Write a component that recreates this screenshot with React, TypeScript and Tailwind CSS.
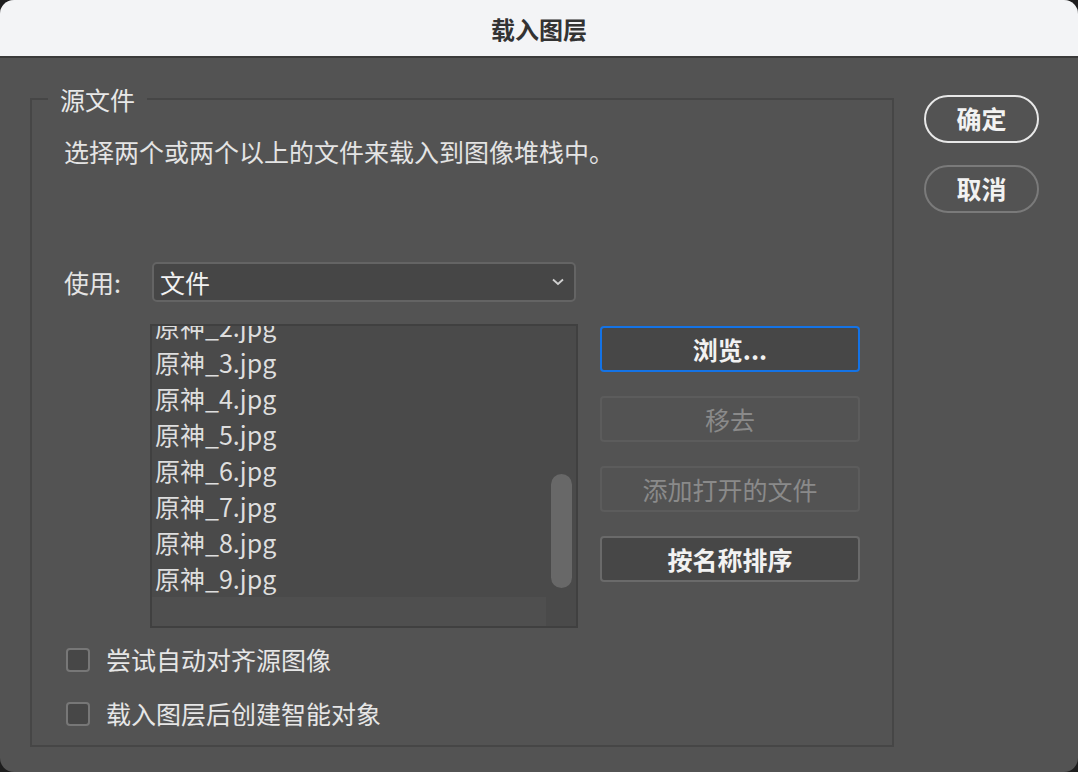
import React from "react";

const files = [2, 3, 4, 5, 6, 7, 8, 9].map((n) => `原神_${n}.jpg`);

const font = { fontFamily: '"Noto Sans CJK SC", "Noto Sans", sans-serif' };

const SideButton: React.FC<{ label: string; variant: "focus" | "disabled" | "normal" }> = ({ label, variant }) => {
  const cls =
    variant === "focus"
      ? "border-[#1473e6] bg-[#474747] text-[#f2f2f2] font-semibold"
      : variant === "disabled"
      ? "border-[#5c5c5c] bg-[#535353] text-[#8a8a8a]"
      : "border-[#6a6a6a] bg-[#474747] text-[#f2f2f2] font-semibold";
  return (
    <div className={`h-[46px] w-[260px] rounded-[4px] border-2 flex items-center justify-center text-[25px] leading-none ${cls}`}>
      {label}
    </div>
  );
};

const Checkbox: React.FC<{ label: string }> = ({ label }) => (
  <div className="flex items-center gap-[16px] h-[34px]">
    <div className="w-[24px] h-[24px] ml-[2px] rounded-[4px] border-2 border-[#777] bg-[#474747]" />
    <span className="text-[25px] text-[#e6e6e6]">{label}</span>
  </div>
);

export default function App() {
  return (
    <div className="w-[1078px] h-[772px] bg-[#1e1e1e]" style={font}>
      <div className="w-full h-full rounded-[14px] overflow-hidden bg-[#535353] flex flex-col">
        <div className="h-[58px] bg-gray-100 flex items-center justify-center border-b-2 border-[#3a3a3a] shrink-0">
          <span className="text-[24px] font-bold text-[#333] pt-[2px]">载入图层</span>
        </div>
        <div className="flex pl-[30px] pt-[24px] gap-[30px]">
          <fieldset className="w-[863px] border-2 border-[#464646] px-[32px] pb-[14px]">
            <legend className="-ml-[16px] px-[12px] text-[25px] leading-[34px] text-[#e8e8e8]">源文件</legend>
            <p className="mt-[18px] text-[25px] leading-[34px] text-[#e4e4e4]">
              选择两个或两个以上的文件来载入到图像堆栈中。
            </p>
            <div className="mt-[94px] flex items-center">
              <span className="w-[88px] shrink-0 text-[25px] leading-[34px] text-[#e4e4e4]">使用:</span>
              <div className="w-[424px] h-[40px] rounded-[5px] border-2 border-[#646464] bg-[#464646] flex items-center justify-between pl-[6px] pr-[10px]">
                <span className="text-[25px] leading-[34px] text-[#f2f2f2]">文件</span>
                <svg width="12" height="8" viewBox="0 0 12 8" fill="none">
                  <path d="M1 1.5 L6 6 L11 1.5" stroke="#d0d0d0" strokeWidth="1.8" />
                </svg>
              </div>
            </div>
            <div className="mt-[22px] flex gap-[22px] ml-[86px]">
              <div className="relative w-[428px] h-[304px] border-2 border-[#404040] bg-[#4a4a4a] flex flex-col overflow-hidden">
                <div className="h-[271px] overflow-hidden">
                  <div className="mt-[-17px] pl-[3px]">
                    {files.map((f) => (
                      <div key={f} className="h-[36px] flex items-center text-[25px] text-[#dedede]">
                        {f}
                      </div>
                    ))}
                  </div>
                </div>
                <div className="flex-1 flex">
                  <div className="flex-1 bg-[#4f4f4f]" />
                  <div className="w-[30px] bg-[#4a4a4a]" />
                </div>
                <div className="absolute left-[399px] top-[148px] w-[21px] h-[114px] rounded-full bg-[#686868]" />
              </div>
              <div className="flex flex-col gap-[24px] pt-[2px]">
                <SideButton label="浏览..." variant="focus" />
                <SideButton label="移去" variant="disabled" />
                <SideButton label="添加打开的文件" variant="disabled" />
                <SideButton label="按名称排序" variant="normal" />
              </div>
            </div>
            <div className="mt-[15px] flex flex-col gap-[20px]">
              <Checkbox label="尝试自动对齐源图像" />
              <Checkbox label="载入图层后创建智能对象" />
            </div>
          </fieldset>
          <div className="flex flex-col gap-[22px] pt-[13px]">
            <div className="w-[115px] h-[48px] rounded-full border-2 border-[#e8e8e8] flex items-center justify-center text-[25px] font-semibold text-[#f2f2f2]">
              确定
            </div>
            <div className="w-[115px] h-[48px] rounded-full border-2 border-[#7a7a7a] flex items-center justify-center text-[25px] font-semibold text-[#f2f2f2]">
              取消
            </div>
          </div>
        </div>
      </div>
    </div>
  );
}
